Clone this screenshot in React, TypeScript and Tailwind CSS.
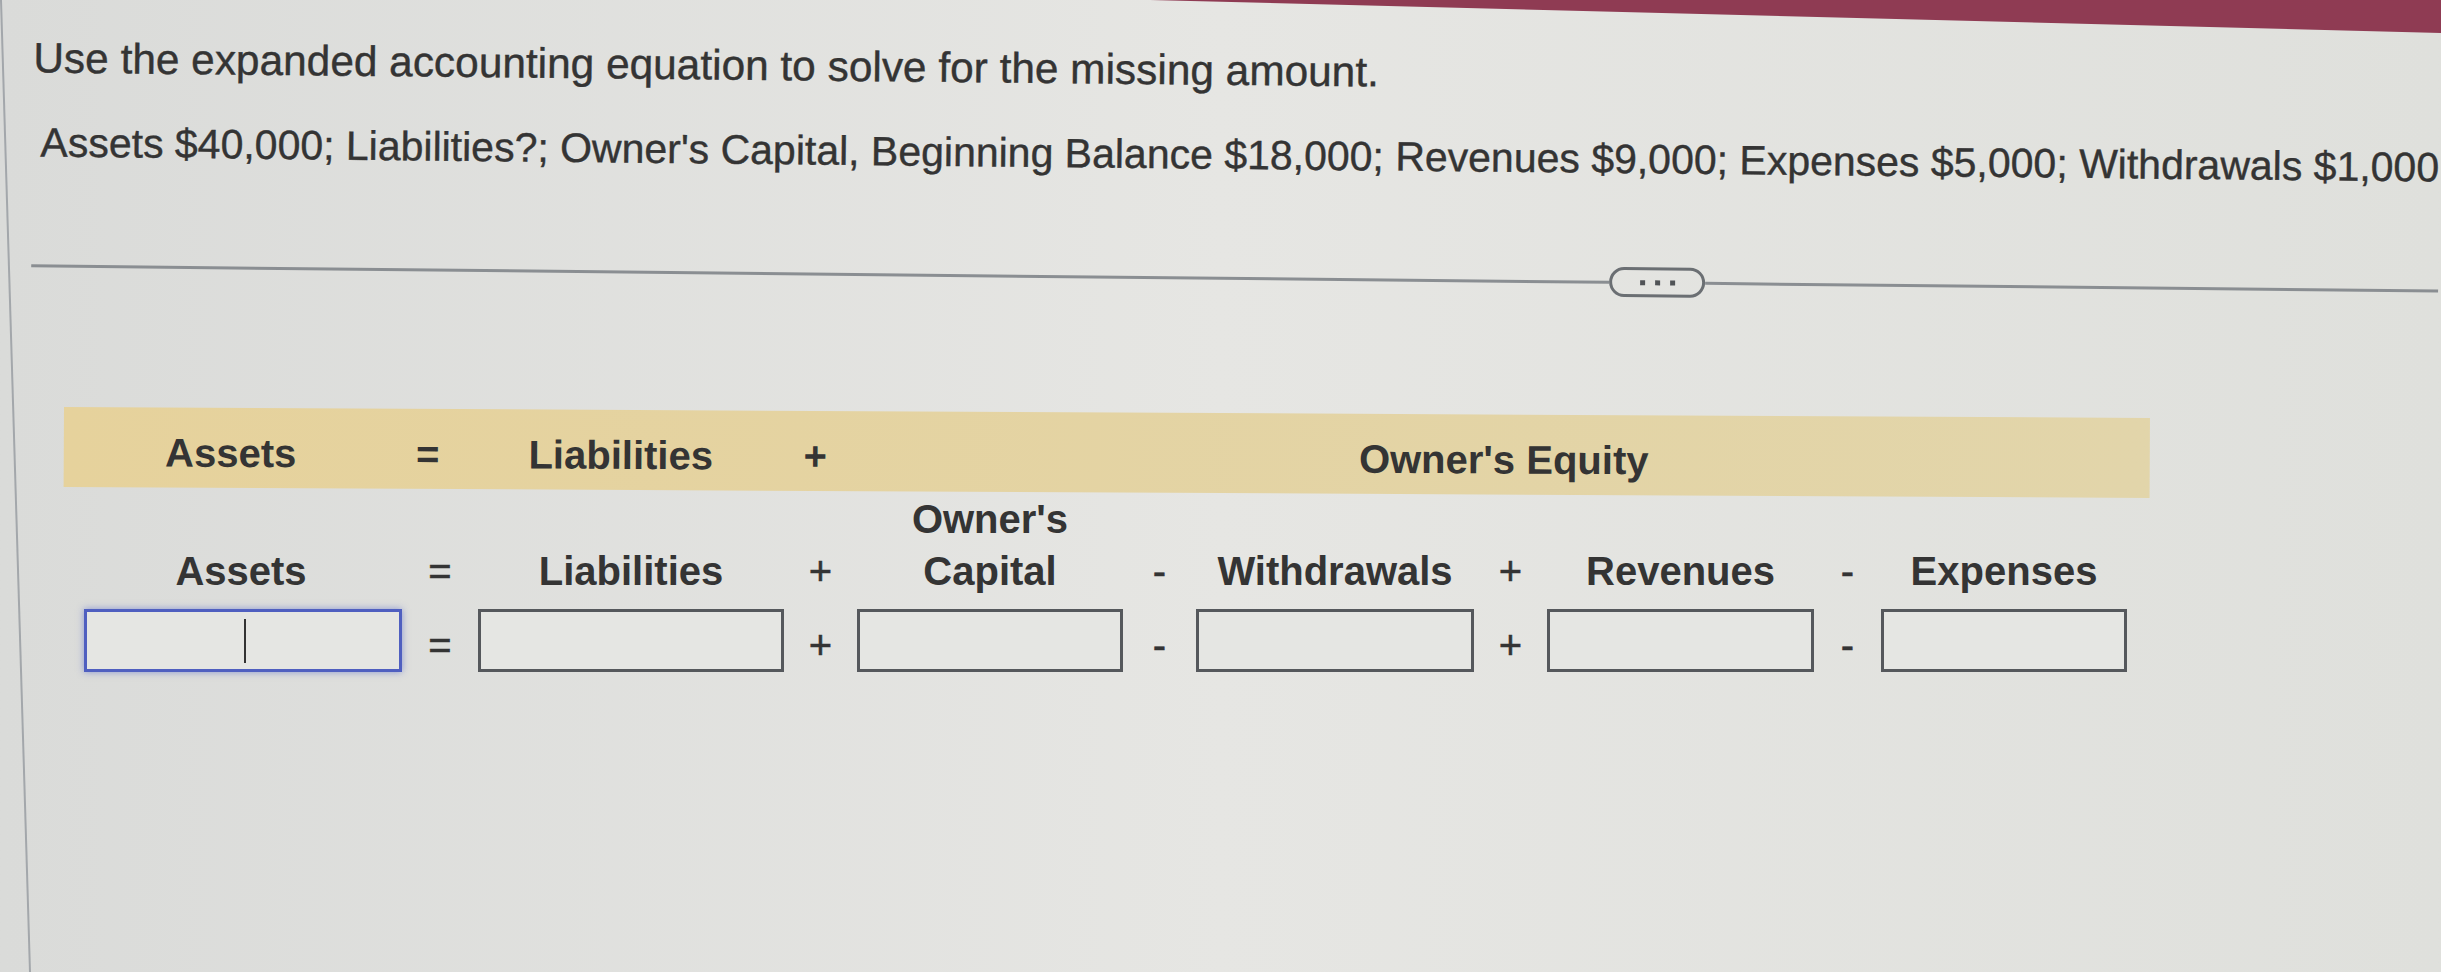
export default function App() {
  const box = "h-[63px] border-[3px] border-[#55585c] bg-[#e5e6e3]";
  const op3 = "flex h-[63px] items-center justify-center pt-[8px] text-[40px] leading-[52px] [-webkit-text-stroke:0.5px_#363636]";
  const lab = "text-center text-[40px] font-bold leading-[52px] whitespace-nowrap";
  const op2 = "text-center text-[40px] leading-[52px] [-webkit-text-stroke:0.5px_#363636]";
  const hd = "h-[80px] pt-[21px] text-center text-[40px] font-bold leading-[48px] whitespace-nowrap";
  return (
    <div className="relative h-[972px] w-full overflow-hidden bg-linear-to-r from-[#dadbd9] via-[#e6e6e3] to-[#dfe0dc] font-['Liberation_Sans',Arial,sans-serif] text-[#343434]">
      <svg className="pointer-events-none absolute left-0 top-0" width="2441" height="972" viewBox="0 0 2441 972">
        <polygon points="1150,0 2441,0 2441,33" fill="#8f3b53" />
        <line x1="1" y1="0" x2="30" y2="972" stroke="#a3a7ab" strokeWidth="2" />
      </svg>

      <div className="origin-top-left rotate-[0.6deg]">
        <div className="pl-[34px] pt-[34px] text-[42.4px] leading-[48px] whitespace-nowrap [-webkit-text-stroke:0.4px_#343434]">
          Use the expanded accounting equation to solve for the missing amount.
        </div>
        <div className="mt-[36px] pl-[42px] text-[41px] leading-[48px] whitespace-nowrap [-webkit-text-stroke:0.4px_#343434]">
          Assets $40,000; Liabilities?; Owner's Capital, Beginning Balance $18,000; Revenues $9,000; Expenses $5,000; Withdrawals $1,000
        </div>
        <div className="ml-[34px] mt-[84px] flex h-[30px] items-center">
          <div className="h-[3px] w-[1578px] bg-[#8a8e92]" />
          <div className="flex h-[30px] w-[96px] shrink-0 items-center justify-center gap-[10px] rounded-full border-[3px] border-[#6b6f73]">
            <span className="h-[5px] w-[5px] bg-[#505356]" />
            <span className="h-[5px] w-[5px] bg-[#505356]" />
            <span className="h-[5px] w-[5px] bg-[#505356]" />
          </div>
          <div className="h-[3px] flex-1 bg-[#8a8e92]" />
        </div>
      </div>

      <div className="ml-[64px] mt-[127px] grid w-[2086px] origin-top-left rotate-[0.3deg] grid-cols-[20px_318px_76px_306px_73px_266px_73px_278px_73px_267px_67px_246px_23px] bg-linear-to-r from-[#e6d29c] to-[#e2d5aa]">
        <div className="h-[80px]" />
        <div className={hd + " pr-[24px]"}>Assets</div>
        <div className={hd + " pr-[24px]"}>=</div>
        <div className={hd + " pr-[20px]"}>Liabilities</div>
        <div className={hd + " pr-[10px]"}>+</div>
        <div className={hd + " col-span-7 pl-[24px]"}>Owner's Equity</div>
        <div className="h-[80px]" />
      </div>

      <div className="ml-[63px] mt-[6px] grid w-[2087px] grid-cols-[21px_318px_76px_306px_73px_266px_73px_278px_73px_267px_67px_246px_23px] items-end gap-y-[12px]">
        <div />
        <div className={lab + " pr-[4px]"}>Assets</div>
        <div className={op2}>=</div>
        <div className={lab}>Liabilities</div>
        <div className={op2}>+</div>
        <div className={lab}>
          Owner's
          <br />
          Capital
        </div>
        <div className={op2}>-</div>
        <div className={lab}>Withdrawals</div>
        <div className={op2}>+</div>
        <div className={lab}>Revenues</div>
        <div className={op2}>-</div>
        <div className={lab}>Expenses</div>
        <div />

        <div />
        <div className="flex h-[63px] items-center justify-center border-[3px] border-[#4f5fc0] bg-[#e5e6e3] shadow-[0_0_7px_rgba(70,90,200,0.55)]">
          <div className="ml-[4px] h-[44px] w-[2px] bg-[#333]" />
        </div>
        <div className={op3}>=</div>
        <div className={box} />
        <div className={op3}>+</div>
        <div className={box} />
        <div className={op3}>-</div>
        <div className={box} />
        <div className={op3}>+</div>
        <div className={box} />
        <div className={op3}>-</div>
        <div className={box} />
        <div />
      </div>
    </div>
  );
}
